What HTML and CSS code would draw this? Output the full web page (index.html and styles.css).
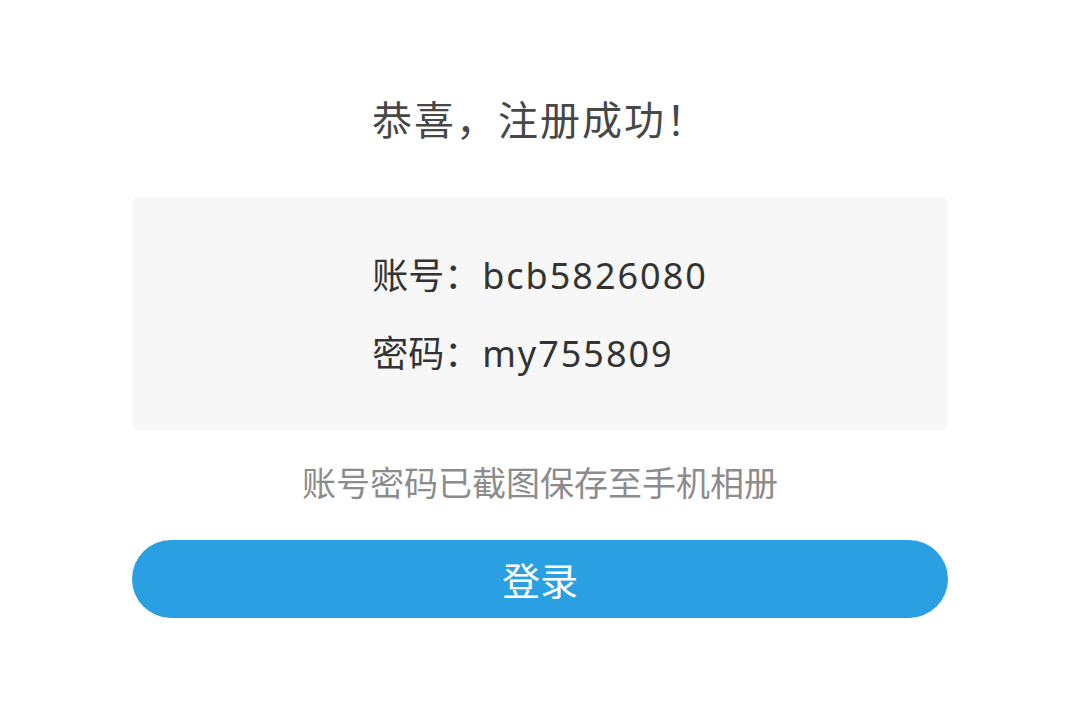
FILE: index.html
```html
<!DOCTYPE html>
<html lang="zh-CN">
<head>
<meta charset="utf-8">
<link rel="stylesheet" href="styles.css">
</head>
<body>
<main class="page">
  <h1 class="title">恭喜，注册成功！</h1>
  <section class="card">
    <div class="creds">
      <p class="line">账号：<span class="value">bcb5826080</span></p>
      <p class="line">密码：<span class="value">my755809</span></p>
    </div>
  </section>
  <p class="hint">账号密码已截图保存至手机相册</p>
  <button class="login">登录</button>
</main>
</body>
</html>
```
FILE: styles.css
```css
html, body {
  margin: 0;
  padding: 0;
  background: #ffffff;
}
body {
  font-family: "Noto Sans CJK SC", "Noto Sans", sans-serif;
  width: 1080px;
  height: 711px;
  overflow: hidden;
}
.page {
  display: flex;
  flex-direction: column;
  align-items: center;
  padding: 0 132px;
}
.title {
  margin: 91px 0 0;
  height: 54px;
  line-height: 54px;
  font-size: 40px;
  letter-spacing: 2px;
  font-weight: 400;
  color: #474747;
}
.card {
  box-sizing: border-box;
  margin-top: 52px;
  width: 816px;
  height: 233px;
  background: #f7f7f7;
  border-radius: 6px;
  display: flex;
  justify-content: center;
  padding-top: 51px;
}
.creds {
  display: flex;
  flex-direction: column;
  gap: 25px;
}
.line {
  margin: 0;
  font-size: 36px;
  line-height: 50px;
  color: #333333;
}
.value {
  font-family: "Noto Sans", sans-serif;
  letter-spacing: 2px;
  margin-left: 2px;
}
.hint {
  margin: 28px 0 0;
  font-size: 34px;
  line-height: 48px;
  color: #8c8c8c;
}
.login {
  margin-top: 34px;
  width: 816px;
  height: 78px;
  border: none;
  border-radius: 39px;
  background: #2a9fe2;
  color: #ffffff;
  font-family: "Noto Sans CJK SC", sans-serif;
  font-size: 38px;
  line-height: 78px;
  padding: 0;
}
```
